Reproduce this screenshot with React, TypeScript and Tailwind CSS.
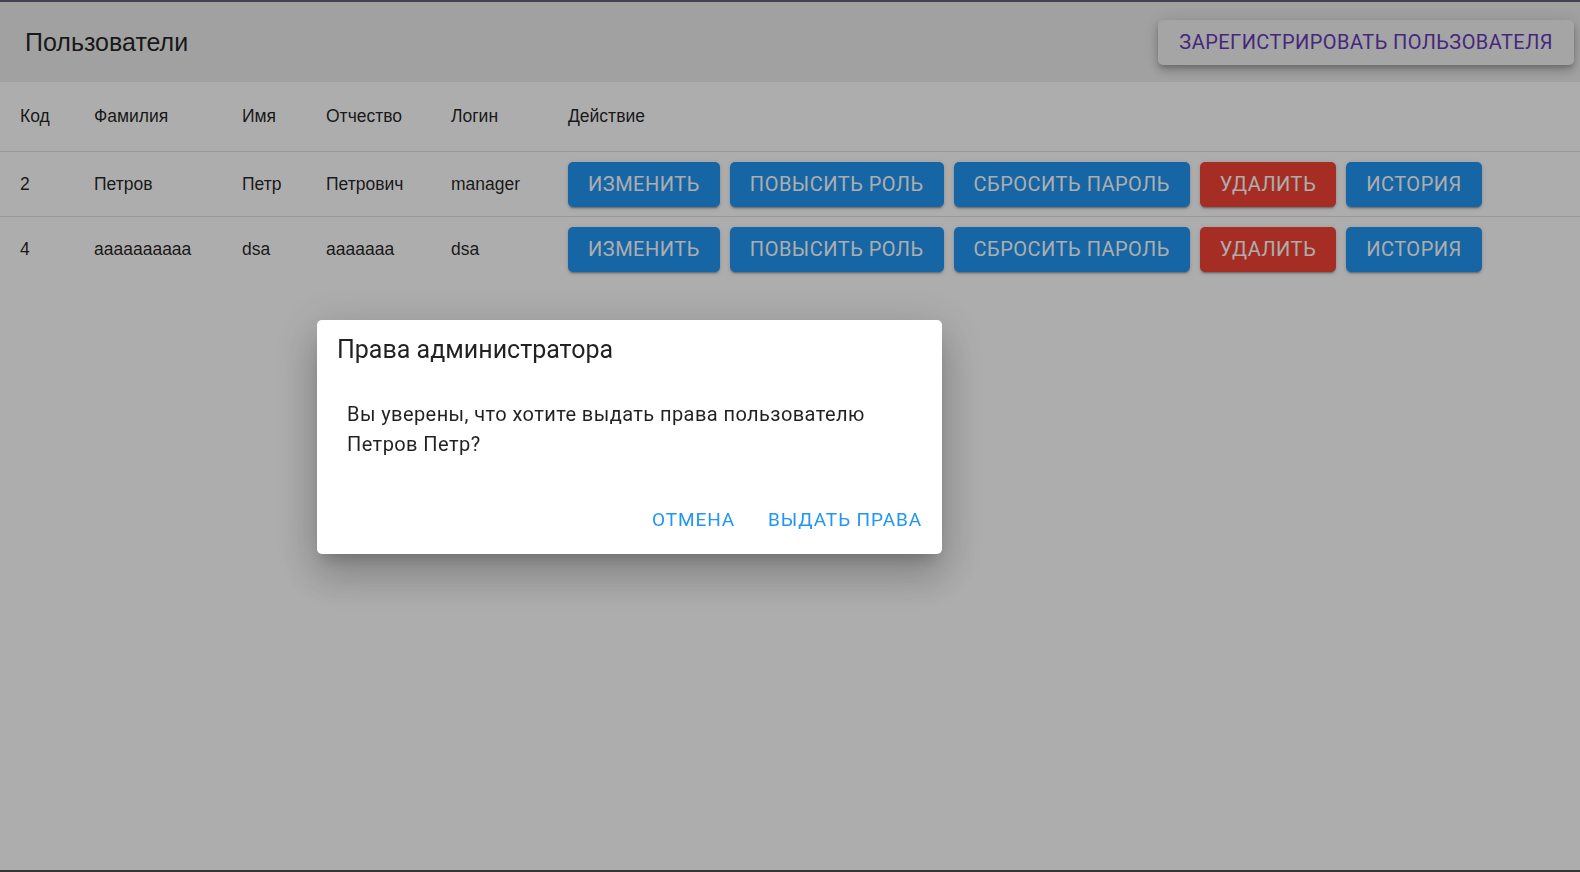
const users = [
  { id: 2, lastName: "Петров", firstName: "Петр", middleName: "Петрович", login: "manager" },
  { id: 4, lastName: "aaaaaaaaaa", firstName: "dsa", middleName: "aaaaaaa", login: "dsa" },
];

const cols = ["w-[74px]", "w-[148px]", "w-[84px]", "w-[125px]", "w-[117px]", ""];

const Btn = ({ label, red }: { label: string; red?: boolean }) => (
  <button
    className={
      "h-[45px] rounded-[5px] px-[20px] text-[20px] uppercase tracking-[0.5px] text-white shadow-[0_3px_1px_-2px_rgba(0,0,0,0.2),0_2px_2px_0_rgba(0,0,0,0.14),0_1px_5px_0_rgba(0,0,0,0.12)] " +
      (red ? "bg-[#f44336]" : "bg-[#2196f3]")
    }
  >
    {label}
  </button>
);

export default function App() {
  return (
    <div className="flex h-[872px] flex-col bg-white font-['Liberation_Sans',Arial,sans-serif] text-[rgba(0,0,0,0.87)]">
      <div className="relative z-30 h-[2px] bg-[#414350]" />
      <div className="flex-1">
        <div className="flex h-[80px] items-center justify-between bg-[#eeeeee] pl-[25px] pr-[6px]">
          <h1 className="pt-[1px] text-[25px]">Пользователи</h1>
          <button className="h-[45px] rounded-[5px] bg-[#f3f3f3] px-[21px] font-['Roboto',sans-serif] text-[20px] uppercase tracking-[0.45px] text-[#673ab7] shadow-[0_3px_5px_-1px_rgba(0,0,0,0.2),0_6px_10px_0_rgba(0,0,0,0.14),0_1px_18px_0_rgba(0,0,0,0.12)]">
            Зарегистрировать пользователя
          </button>
        </div>
        <table className="w-full table-fixed border-collapse text-left text-[17.5px]">
          <colgroup>
            {cols.map((c, i) => (
              <col key={i} className={c} />
            ))}
          </colgroup>
          <thead>
            <tr className="h-[69px] border-b border-[#e0e0e0]">
              {["Код", "Фамилия", "Имя", "Отчество", "Логин", "Действие"].map((h) => (
                <th key={h} className="pl-[20px] font-normal">
                  {h}
                </th>
              ))}
            </tr>
          </thead>
          <tbody>
            {users.map((u, idx) => (
              <tr key={u.id} className={"h-[65px] " + (idx === 0 ? "border-b border-[#e0e0e0]" : "")}>
                <td className="pl-[20px] pt-[1px]">{u.id}</td>
                <td className="pl-[20px] pt-[1px]">{u.lastName}</td>
                <td className="pl-[20px] pt-[1px]">{u.firstName}</td>
                <td className="pl-[20px] pt-[1px]">{u.middleName}</td>
                <td className="pl-[20px] pt-[1px]">{u.login}</td>
                <td className="pl-[20px] pt-[1px]">
                  <div className="flex gap-[10px] font-['Roboto',sans-serif]">
                    <Btn label="Изменить" />
                    <Btn label="Повысить роль" />
                    <Btn label="Сбросить пароль" />
                    <Btn label="Удалить" red />
                    <Btn label="История" />
                  </div>
                </td>
              </tr>
            ))}
          </tbody>
        </table>
      </div>
      <div className="relative z-30 h-[2px] bg-[#363636]" />

      {/* modal */}
      <div className="fixed inset-0 z-20 bg-[rgba(0,0,0,0.32)]" />
      <div className="fixed left-[317px] top-[320px] z-20 flex h-[234px] w-[625px] flex-col rounded-[5px] bg-white font-['Roboto',sans-serif] shadow-[0_11px_15px_-7px_rgba(0,0,0,0.2),0_24px_38px_3px_rgba(0,0,0,0.14),0_9px_46px_8px_rgba(0,0,0,0.12)]">
        <h2 className="px-[20px] pt-[14px] text-[25px] leading-[32px]">Права администратора</h2>
        <p className="mt-[34px] px-[30px] text-[20px] leading-[29.5px] tracking-[0.42px] text-[rgba(0,0,0,0.87)]">
          Вы уверены, что хотите выдать права пользователю Петров Петр?
        </p>
        <div className="mt-auto flex justify-end gap-[13px] pb-[11px] pr-[10px]">
          <button className="h-[45px] rounded-[5px] px-[10px] text-[19px] uppercase tracking-[0.9px] text-[#2196f3]">
            Отмена
          </button>
          <button className="h-[45px] rounded-[5px] px-[10px] text-[19px] uppercase tracking-[0.9px] text-[#2196f3]">
            Выдать права
          </button>
        </div>
      </div>
    </div>
  );
}
